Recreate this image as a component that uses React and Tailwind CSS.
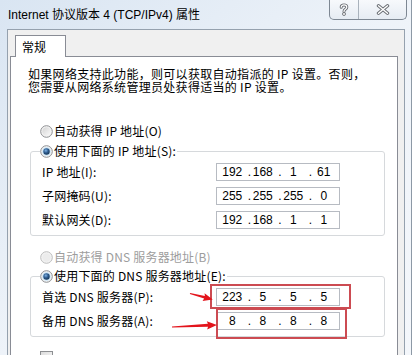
import React from 'react'

const cjk = "font-['Noto_Sans_CJK_SC',sans-serif]"

// Win7 style radio button
const Radio = ({ checked, disabled }) => (
  <svg width="13" height="13" viewBox="0 0 13 13" className="shrink-0">
    <defs>
      <linearGradient id="rbg" x1="0" y1="0" x2="1" y2="1">
        <stop offset="0" stopColor="#d4d4d4" />
        <stop offset="1" stopColor="#fafafa" />
      </linearGradient>
      <radialGradient id="rdot" cx="0.4" cy="0.35" r="0.7">
        <stop offset="0" stopColor="#7fb2e4" />
        <stop offset="0.5" stopColor="#2d5b8e" />
        <stop offset="1" stopColor="#16324f" />
      </radialGradient>
    </defs>
    <circle cx="6.5" cy="6.5" r="5.8" fill="#f4f4f4" stroke={disabled ? '#bcbcbc' : '#8d8f92'} strokeWidth="1" />
    {checked ? (
      <>
        <circle cx="6.5" cy="6.5" r="4.3" fill="#c6e3f7" />
        <circle cx="6.5" cy="6.5" r="3.2" fill="url(#rdot)" />
      </>
    ) : (
      <circle cx="6.5" cy="6.5" r="4.2" fill={disabled ? '#ececec' : 'url(#rbg)'} />
    )}
  </svg>
)

const RadioRow = ({ checked, disabled, children }) => (
  <div className={`flex items-center gap-[1px] h-[14px] text-[12px] leading-[14px] tracking-[0.2px] ${disabled ? 'text-[#9d9d9d]' : 'text-black'}`}>
    <Radio checked={checked} disabled={disabled} />
    <span>{children}</span>
  </div>
)

const IpBox = ({ parts }) => (
  <div className="w-[124px] h-[18px] border border-[#b7bbc2] bg-white flex items-center font-['Liberation_Sans',sans-serif] text-[12px] text-black">
    {parts.map((p, i) => (
      <div key={i} className="w-[31px] flex items-center">
        <span className="w-[4px] text-center">{i > 0 ? '.' : ''}</span>
        <span className="flex-1 text-center pr-[4px]">{p}</span>
      </div>
    ))}
  </div>
)

const Row = ({ label, parts }) => (
  <div className="flex items-center h-[18px]">
    <span className="w-[174px] text-[12px] leading-[14px] tracking-[0.2px]">{label}</span>
    <IpBox parts={parts} />
  </div>
)

const Group = ({ legend, children }) => (
  <fieldset className="ml-[19px] mr-[12px] border border-[#d6d9dc] rounded-[3px] pl-[9px] pt-[5px] pb-[6px]">
    <legend className="bg-white pr-[1px]">
      <RadioRow checked>{legend}</RadioRow>
    </legend>
    <div className="pl-[2px] flex flex-col gap-[6px]">{children}</div>
  </fieldset>
)

export default function App() {
  return (
    <div className={`relative w-[414px] h-[355px] overflow-hidden bg-white ${cjk}`}>
      <div className="w-[412px] h-full flex flex-col bg-gradient-to-br from-[#d9e5f2] via-[#eef3f9] to-[#f4f7fb] border-r border-[#8d99a6]">
        {/* title bar */}
        <div className="h-[29px] shrink-0 flex items-start justify-between">
          <div className="pl-[8px] pt-[7px] text-[12px] leading-[16px] text-black font-['Liberation_Sans','Noto_Sans_CJK_SC',sans-serif]">
            Internet 协议版本 4 (TCP/IPv4) 属性
          </div>
          <div className="mr-[4px] h-[20px] flex border border-t-0 border-[#7d8793] rounded-b-[5px] bg-gradient-to-b from-[#f7f9fc] to-[#e6ecf3] overflow-hidden">
            <div className="w-[29px] flex items-center justify-center border-r border-[#a9b2bc]">
              <svg width="10" height="13" viewBox="0 0 10 13">
                <path d="M2.2 4.2 C2.2 1.2 7.8 1.2 7.8 4.2 C7.8 6.4 5 6.2 5 8.4" fill="none" stroke="#6b6f75" strokeWidth="3" strokeLinecap="round" />
                <path d="M2.2 4.2 C2.2 1.2 7.8 1.2 7.8 4.2 C7.8 6.4 5 6.2 5 8.4" fill="none" stroke="#ffffff" strokeWidth="1.2" strokeLinecap="round" />
                <circle cx="5" cy="11" r="1.5" fill="#ffffff" stroke="#6b6f75" strokeWidth="0.9" />
              </svg>
            </div>
            <div className="w-[47px] flex items-center justify-center">
              <svg width="14" height="11" viewBox="0 0 14 11">
                <path d="M2.5 1.8 L11.5 9.2 M11.5 1.8 L2.5 9.2" fill="none" stroke="#6b6f75" strokeWidth="3.4" strokeLinecap="round" />
                <path d="M2.5 1.8 L11.5 9.2 M11.5 1.8 L2.5 9.2" fill="none" stroke="#ffffff" strokeWidth="1.4" strokeLinecap="round" />
              </svg>
            </div>
          </div>
        </div>

        {/* window body */}
        <div className="flex-1 ml-[7px] mr-[6px] bg-[#f0f0f0] border-l border-r border-t border-[#95a1ae] pl-[2px] pr-[6px] pt-[5px] flex flex-col">
          <div className="ml-[5px] w-[51px] h-[22px] -mb-[1px] relative z-10 bg-white border border-b-0 border-[#898c95] flex items-center pl-[6px] text-[12px] text-black">
            常规
          </div>
          <div className="flex-1 bg-white border border-[#898c95] text-black">
            <p className="pt-[10px] pl-[17px] text-[12px] leading-[13px] tracking-[0.3px]">
              如果网络支持此功能，则可以获取自动指派的 IP 设置。否则，
              <br />
              您需要从网络系统管理员处获得适当的 IP 设置。
            </p>

            <div className="mt-[31px] pl-[29px]">
              <RadioRow>自动获得 IP 地址(O)</RadioRow>
            </div>

            <div className="mt-[6px]">
              <Group legend="使用下面的 IP 地址(S):">
                <Row label="IP 地址(I):" parts={['192', '168', '1', '61']} />
                <Row label="子网掩码(U):" parts={['255', '255', '255', '0']} />
                <Row label="默认网关(D):" parts={['192', '168', '1', '1']} />
              </Group>
            </div>

            <div className="mt-[14px] pl-[29px]">
              <RadioRow disabled>自动获得 DNS 服务器地址(B)</RadioRow>
            </div>

            <div className="mt-[5px]">
              <Group legend="使用下面的 DNS 服务器地址(E):">
                <Row label="首选 DNS 服务器(P):" parts={['223', '5', '5', '5']} />
                <Row label="备用 DNS 服务器(A):" parts={['8', '8', '8', '8']} />
              </Group>
            </div>

            <div className="mt-[14px] pl-[29px]">
              <div className="w-[13px] h-[13px] border border-[#8d8f92] bg-gradient-to-br from-[#dcdcdc] to-[#fafafa]" />
            </div>
          </div>
        </div>
      </div>

      {/* red annotations drawn over the dialog */}
      <div className="absolute left-[210px] top-[284px] w-[141px] h-[25px] border-2 border-[#cc4b52] pointer-events-none" />
      <div className="absolute left-[216px] top-[308px] w-[131px] h-[31px] border-2 border-[#cc4b52] pointer-events-none" />
      <svg className="absolute left-0 top-0 pointer-events-none" width="414" height="355">
        <g transform="translate(190 293.5) rotate(14.5)">
          <polygon points="0,-0.6 15,-1.4 14,-4 23.5,0 14,4 15,1.4 0,0.6" fill="#e3141c" />
        </g>
        <g transform="translate(172 327) rotate(-2.6)">
          <polygon points="0,-0.6 36,-1.5 35,-4.2 45,0 35,4.2 36,1.5 0,0.6" fill="#e3141c" />
        </g>
      </svg>
    </div>
  )
}
